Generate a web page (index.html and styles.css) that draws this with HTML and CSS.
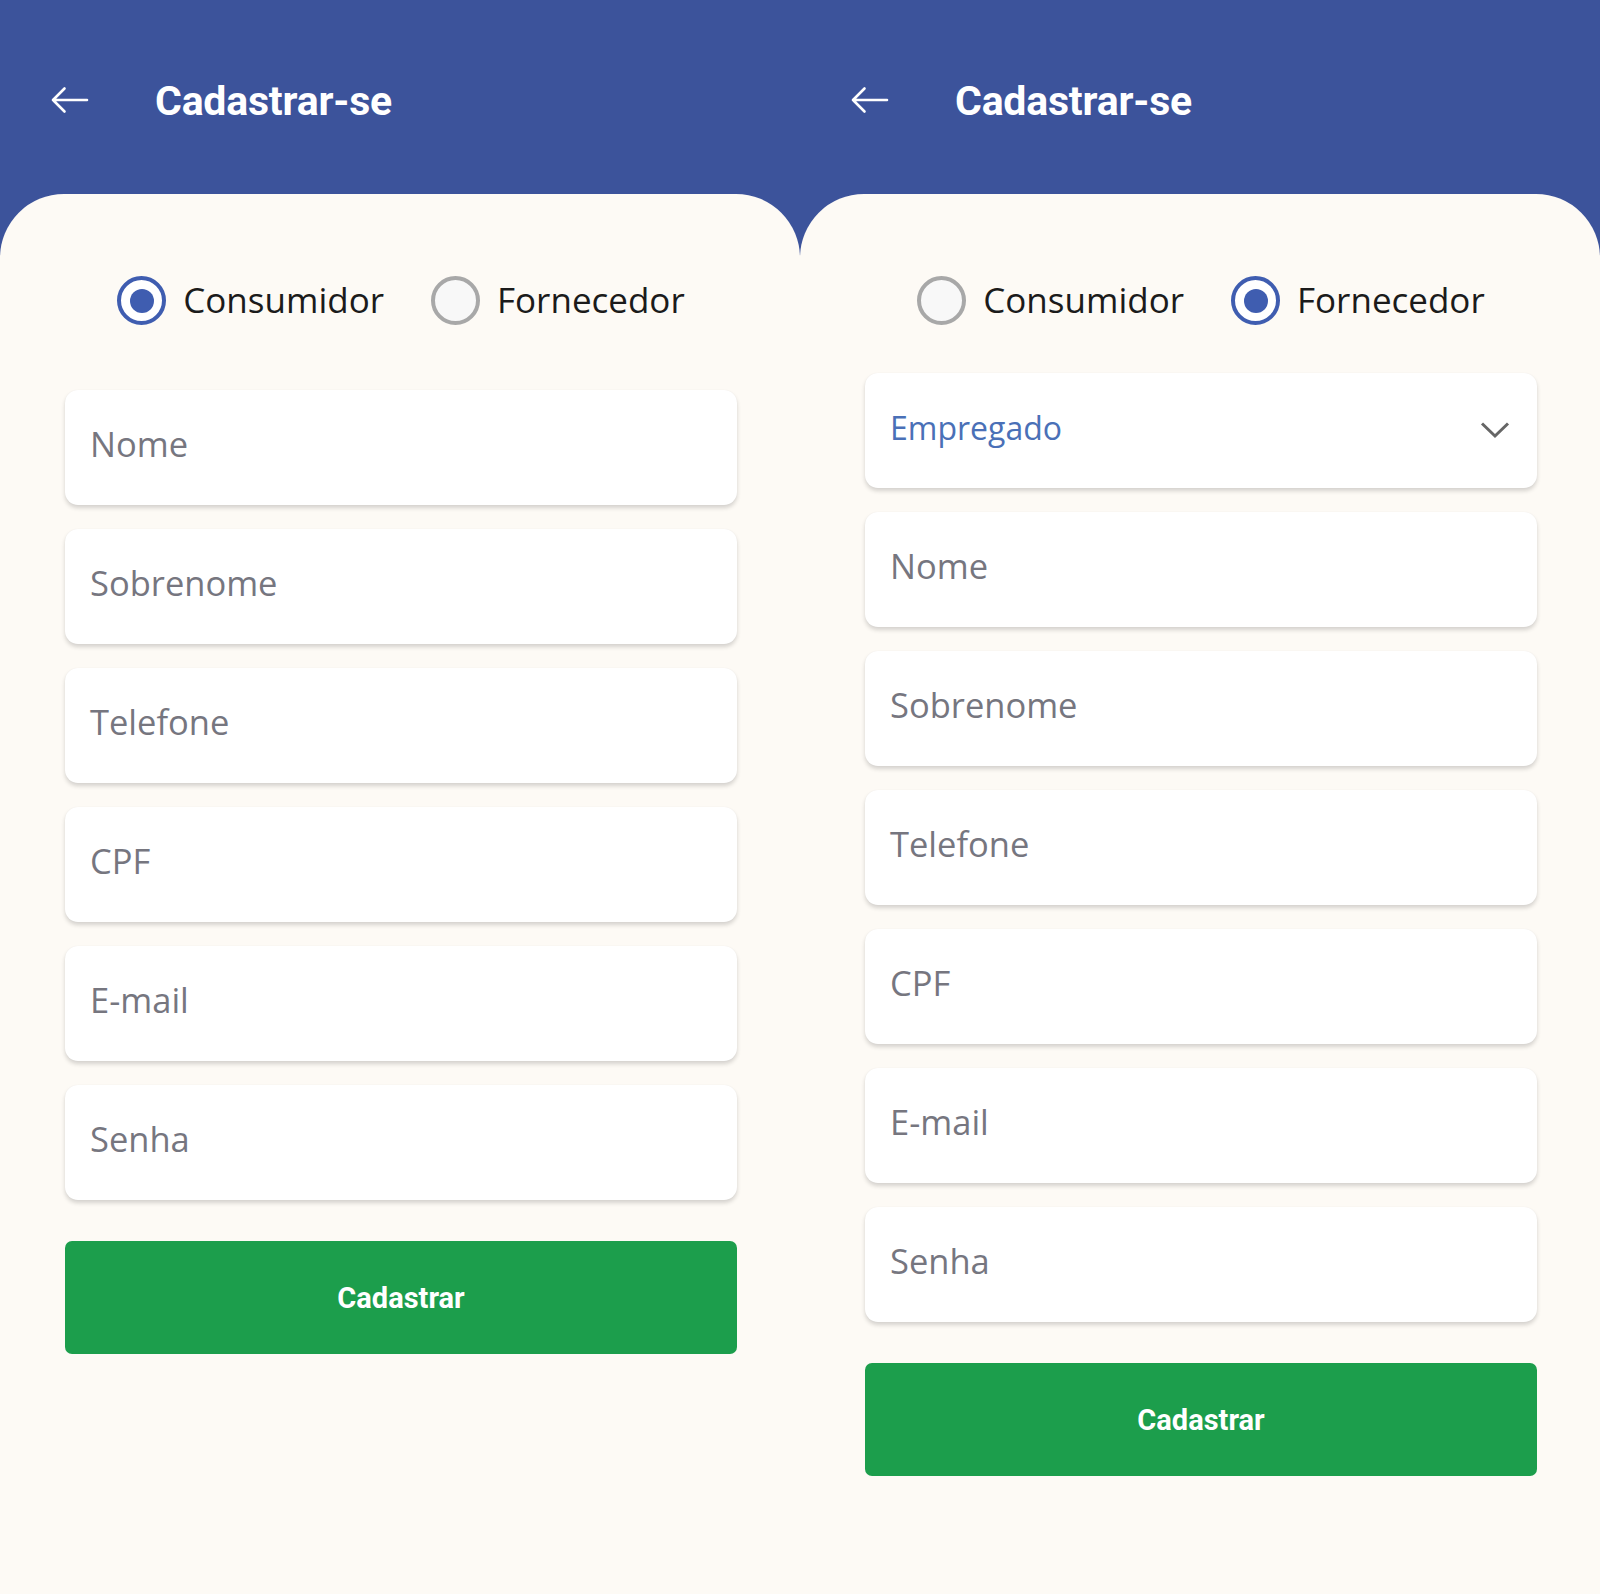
FILE: index.html
```html
<!DOCTYPE html>
<html lang="pt-BR">
<head>
<meta charset="utf-8">
<title>Cadastrar-se</title>
<link rel="stylesheet" href="styles.css">
</head>
<body>
<div class="screens">
  <section class="screen">
    <header class="appbar">
      <svg class="back" width="38" height="28" viewBox="0 0 38 28" aria-hidden="true">
        <path d="M2 14 H36 M13.5 2.5 L2 14 L13.5 25.5" fill="none" stroke="#fff" stroke-width="2.6" stroke-linecap="round" stroke-linejoin="round"/>
      </svg>
      <h1 class="title">Cadastrar-se</h1>
    </header>
    <main class="sheet">
      <div class="radios">
        <label class="radio"><span class="circle checked"></span><span>Consumidor</span></label>
        <label class="radio"><span class="circle"></span><span>Fornecedor</span></label>
      </div>
      <div class="fields">
        <div class="field">Nome</div>
        <div class="field">Sobrenome</div>
        <div class="field">Telefone</div>
        <div class="field">CPF</div>
        <div class="field">E-mail</div>
        <div class="field">Senha</div>
      </div>
      <button class="submit" type="button">Cadastrar</button>
    </main>
  </section>
  <section class="screen">
    <header class="appbar">
      <svg class="back" width="38" height="28" viewBox="0 0 38 28" aria-hidden="true">
        <path d="M2 14 H36 M13.5 2.5 L2 14 L13.5 25.5" fill="none" stroke="#fff" stroke-width="2.6" stroke-linecap="round" stroke-linejoin="round"/>
      </svg>
      <h1 class="title">Cadastrar-se</h1>
    </header>
    <main class="sheet">
      <div class="radios">
        <label class="radio"><span class="circle"></span><span>Consumidor</span></label>
        <label class="radio"><span class="circle checked"></span><span>Fornecedor</span></label>
      </div>
      <div class="fields fields-tight">
        <div class="field select">
          <span class="select-value">Empregado</span>
          <svg class="chevron" width="30" height="18" viewBox="0 0 30 18" aria-hidden="true">
            <path d="M2 2.5 L15 15 L28 2.5" fill="none" stroke="#666" stroke-width="3"/>
          </svg>
        </div>
        <div class="field">Nome</div>
        <div class="field">Sobrenome</div>
        <div class="field">Telefone</div>
        <div class="field">CPF</div>
        <div class="field">E-mail</div>
        <div class="field">Senha</div>
      </div>
      <button class="submit" type="button">Cadastrar</button>
    </main>
  </section>
</div>
</body>
</html>
```

FILE: styles.css
```css
html, body {
  margin: 0;
  padding: 0;
}

body {
  background: #3c539b;
  font-family: "Open Sans", "Noto Sans", sans-serif;
}

.screens {
  display: flex;
  width: 1600px;
  height: 1594px;
}

.screen {
  width: 800px;
  height: 1594px;
  display: flex;
  flex-direction: column;
  background: #3c539b;
}

.appbar {
  height: 194px;
  box-sizing: border-box;
  padding: 8px 0 0 51px;
  display: flex;
  align-items: center;
  flex-shrink: 0;
}

.back {
  display: block;
  margin-top: -2px;
}

.title {
  margin: 0 0 0 66px;
  font-family: Roboto, "Liberation Sans", sans-serif;
  font-weight: 700;
  font-size: 41px;
  color: #ffffff;
  letter-spacing: -0.2px;
}

.sheet {
  flex: 1;
  background: #fdfaf5;
  border-radius: 64px 64px 0 0;
  padding: 0 63px 0 65px;
  display: flex;
  flex-direction: column;
}

.radios {
  margin-top: 82px;
  display: flex;
  justify-content: center;
  gap: 47px;
}

.radio {
  display: flex;
  align-items: center;
  gap: 17px;
  font-size: 35px;
  color: #1b1b1b;
  line-height: 49px;
}

.radio span:last-child {
  margin-top: -3px;
}

.circle {
  width: 49px;
  height: 49px;
  box-sizing: border-box;
  border-radius: 50%;
  border: 4px solid #a8a8a8;
  background: #f8f8f8;
  position: relative;
}

.circle.checked {
  border-color: #3f5db0;
  background: #ffffff;
}

.circle.checked::after {
  content: "";
  position: absolute;
  left: 8.5px;
  top: 8.5px;
  width: 24px;
  height: 24px;
  border-radius: 50%;
  background: #3f5db0;
}

.fields {
  margin-top: 65px;
  display: flex;
  flex-direction: column;
  gap: 24px;
}

.fields-tight {
  margin-top: 48px;
}

.field {
  height: 115px;
  box-sizing: border-box;
  background: #ffffff;
  border-radius: 13px;
  box-shadow: 0 3px 4px rgba(0, 0, 0, 0.16), 0 0 1px rgba(0, 0, 0, 0.06);
  display: flex;
  align-items: center;
  padding: 0 27px 9px 25px;
  font-size: 34.5px;
  color: #76767f;
}

.select {
  justify-content: space-between;
  padding-bottom: 6px;
}

.select-value {
  color: #4a70b7;
  font-size: 32px;
}

.chevron {
  display: block;
  margin-top: 4px;
}

.submit {
  margin-top: 41px;
  height: 113px;
  border: none;
  border-radius: 7px;
  background: #1c9e4c;
  color: #ffffff;
  font-family: Roboto, "Liberation Sans", sans-serif;
  font-weight: 700;
  font-size: 29px;
  padding: 0;
}
```
